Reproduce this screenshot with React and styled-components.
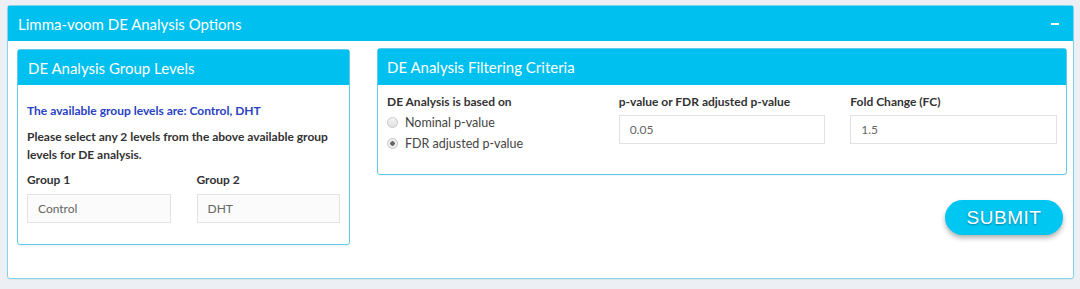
import styled, { createGlobalStyle } from "styled-components";

const Global = createGlobalStyle`
  body {
    margin: 0;
    background: #ecf0f5;
    font-family: Lato, "Open Sans", sans-serif;
    color: #333;
  }
`;

const Page = styled.div`
  padding: 5px 6px 10px 7px;
`;

const Box = styled.div`
  background: #fff;
  border: 1px solid ${(p) => (p.outer ? "#7fd3ec" : "#5fcbe9")};
  border-radius: 3px;
  box-shadow: 0 1px 1px rgba(0, 0, 0, 0.05);
`;

const Header = styled.div`
  display: flex;
  align-items: center;
  justify-content: space-between;
  height: ${(p) => p.h || 35}px;
  padding: 0 ${(p) => p.pl || 10}px;
  background: #00c0ef;
  color: #fff;
  font-size: 15px;
`;

const Minus = styled.span`
  width: 8px;
  height: 2px;
  background: #fff;
  margin-right: 4px;
`;

const OuterBody = styled.div`
  display: flex;
  align-items: flex-start;
  padding: 7px 6px 33px 9px;
`;

const LeftBox = styled(Box)`
  width: 331px;
  margin-top: 1px;
`;

const RightCol = styled.div`
  flex: 1;
  margin-left: 27px;
  display: flex;
  flex-direction: column;
`;

const Body = styled.div`
  padding: ${(p) => p.pad};
`;

const Note = styled.p`
  margin: 0 0 ${(p) => p.mb || 0}px;
  font-size: 12px;
  font-weight: 700;
  line-height: 18px;
  color: ${(p) => (p.blue ? "#2842c4" : "#333")};
`;

const Row = styled.div`
  display: grid;
  grid-template-columns: ${(p) => p.cols};
  column-gap: ${(p) => p.gap}px;
`;

const Label = styled.div`
  font-size: 12px;
  font-weight: 700;
  line-height: 16px;
  margin-bottom: ${(p) => p.mb || 5}px;
`;

const Input = styled.input`
  box-sizing: border-box;
  width: 100%;
  height: 29px;
  padding: 0 10px;
  border: 1px solid #e2e2e2;
  background: ${(p) => (p.muted ? "#fbfbfb" : "#fff")};
  font-family: inherit;
  font-size: 12px;
  color: #666;
  outline: none;
`;

const Radio = styled.label`
  display: flex;
  align-items: center;
  gap: 7px;
  height: 21px;
  font-size: 12.5px;
  color: #444;
`;

const Dot = styled.span`
  box-sizing: border-box;
  width: 11px;
  height: 11px;
  border-radius: 50%;
  border: 1px solid #c8c8c8;
  background: ${(p) =>
    p.on
      ? "radial-gradient(circle, #666 0 2px, #eee 2.5px)"
      : "linear-gradient(#f4f4f4, #e2e2e2)"};
`;

const SubmitWrap = styled.div`
  display: flex;
  justify-content: flex-end;
  padding: 25px 4px 0 0;
`;

const Submit = styled.button`
  width: 118px;
  height: 35px;
  border: none;
  border-radius: 18px;
  background: #00c6f2;
  color: #fff;
  font-family: "Liberation Sans", Arial, sans-serif;
  font-size: 19px;
  letter-spacing: 0.5px;
  text-shadow: 0 1px 2px rgba(0, 0, 0, 0.35);
  box-shadow: 0 3px 5px rgba(0, 0, 0, 0.3);
`;

export default function App() {
  return (
    <>
      <Global />
      <Page>
        <Box outer>
          <Header>
            <span>Limma-voom DE Analysis Options</span>
            <Minus />
          </Header>
          <OuterBody>
            <LeftBox>
              <Header pl={10}>DE Analysis Group Levels</Header>
              <Body pad="17px 9px 21px 9px">
                <Note blue mb={8}>
                  The available group levels are: Control, DHT
                </Note>
                <Note mb={8}>
                  Please select any 2 levels from the above available group
                  levels for DE analysis.
                </Note>
                <Row cols="1fr 1fr" gap={26}>
                  <div>
                    <Label mb={6}>Group 1</Label>
                    <Input muted defaultValue="Control" />
                  </div>
                  <div>
                    <Label mb={6}>Group 2</Label>
                    <Input muted defaultValue="DHT" />
                  </div>
                </Row>
              </Body>
            </LeftBox>
            <RightCol>
              <Box>
                <Header h={36} pl={9}>DE Analysis Filtering Criteria</Header>
                <Body pad="9px 9px 20px 9px">
                  <Row cols="1fr 1fr 1fr" gap={25}>
                    <div>
                      <Label mb={2}>DE Analysis is based on</Label>
                      <Radio>
                        <Dot />
                        Nominal p-value
                      </Radio>
                      <Radio>
                        <Dot on />
                        FDR adjusted p-value
                      </Radio>
                    </div>
                    <div>
                      <Label mb={5}>p-value or FDR adjusted p-value</Label>
                      <Input defaultValue="0.05" />
                    </div>
                    <div>
                      <Label mb={5}>Fold Change (FC)</Label>
                      <Input defaultValue="1.5" />
                    </div>
                  </Row>
                </Body>
              </Box>
              <SubmitWrap>
                <Submit>SUBMIT</Submit>
              </SubmitWrap>
            </RightCol>
          </OuterBody>
        </Box>
      </Page>
    </>
  );
}
